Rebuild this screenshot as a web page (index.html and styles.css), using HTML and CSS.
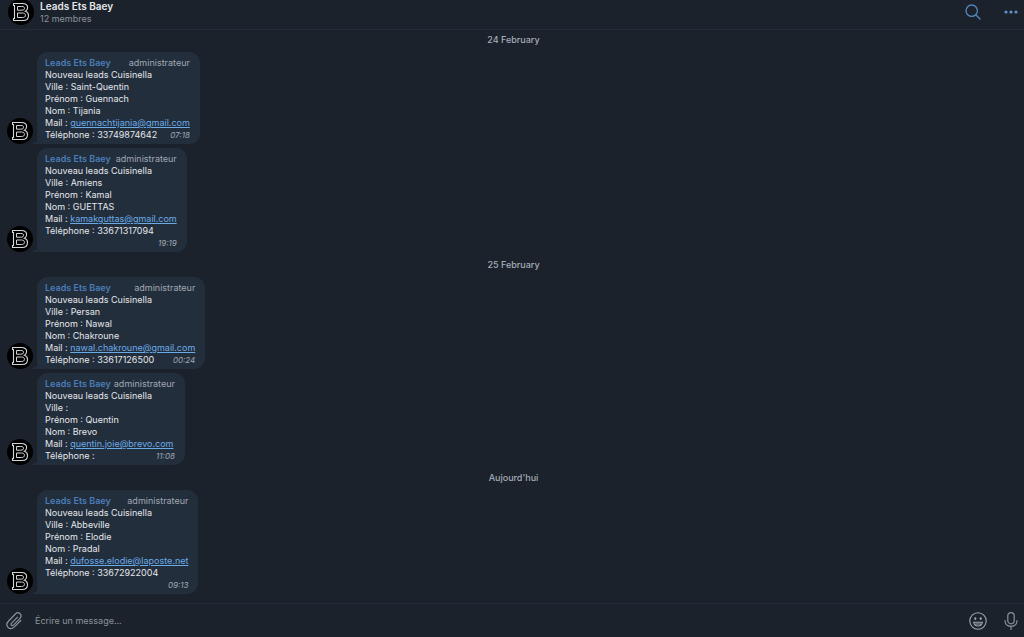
FILE: index.html
```html
<!DOCTYPE html>
<html lang="fr">
<head>
    <meta charset="UTF-8">
    <meta name="viewport" content="width=device-width, initial-scale=1.0">
    <title>Leads Ets Baey</title>
    <link rel="stylesheet" href="styles.css">
</head>
<body>
    <!-- Shared logo -->
    <svg class="sprite" aria-hidden="true">
        <symbol id="logo" viewBox="0 0 26 26">
            <circle cx="13" cy="13" r="13" fill="#000"/>
            <path d="M5.5 4.5H14.5C18 4.5 19.6 6.3 19.6 8.6C19.6 10.4 18.7 11.6 17.4 12.2C19.3 12.8 20.5 14.3 20.5 16.4C20.5 19.4 18.4 21.5 15 21.5H5.5V19.5H6.5V6.5H5.5Z" fill="none" stroke="#d4d6d9" stroke-width="1.1"/>
            <path d="M9.5 7.5H13.8C15.7 7.5 16.5 8 16.5 9.3C16.5 10.6 15.7 11.2 13.8 11.2H9.5ZM9.5 14H14.3C16.5 14 17.4 14.8 17.4 16.3C17.4 17.8 16.5 18.5 14.3 18.5H9.5Z" fill="none" stroke="#d4d6d9" stroke-width="1"/>
        </symbol>
    </svg>

    <div class="chat">
        <header class="chat-header">
            <svg class="avatar"><use href="#logo"/></svg>
            <div class="chat-info">
                <h1>Leads Ets Baey</h1>
                <p>12 membres</p>
            </div>
            <button class="icon-button" type="button" aria-label="Rechercher">
                <svg width="18" height="18" viewBox="0 0 18 18" fill="none" stroke="#5288c1" stroke-width="1.3" stroke-linecap="round">
                    <circle cx="7.7" cy="7.7" r="5.7"/>
                    <path d="M12 12L16 16"/>
                </svg>
            </button>
            <button class="icon-button" type="button" aria-label="Plus">
                <svg width="18" height="18" viewBox="0 0 18 18" fill="#5f93cc">
                    <circle cx="4" cy="9" r="1.6"/>
                    <circle cx="9" cy="9" r="1.6"/>
                    <circle cx="14" cy="9" r="1.6"/>
                </svg>
            </button>
        </header>

        <main class="messages">
            <h2 class="date">24 February</h2>
            <article class="message">
                <svg class="avatar"><use href="#logo"/></svg>
                <div class="bubble">
                    <div class="bubble-header"><span class="author">Leads Ets Baey</span><span class="role">administrateur</span></div>
                    <p>Nouveau leads Cuisinella</p>
                    <p>Ville : Saint-Quentin</p>
                    <p>Prénom : Guennach</p>
                    <p>Nom : Tijania</p>
                    <p>Mail : <a href="mailto:guennachtijania@gmail.com">guennachtijania@gmail.com</a></p>
                    <div class="bubble-footer"><p>Téléphone : 33749874642</p><time>07:18</time></div>
                </div>
            </article>
            <article class="message">
                <svg class="avatar"><use href="#logo"/></svg>
                <div class="bubble">
                    <div class="bubble-header"><span class="author">Leads Ets Baey</span><span class="role">administrateur</span></div>
                    <p>Nouveau leads Cuisinella</p>
                    <p>Ville : Amiens</p>
                    <p>Prénom : Kamal</p>
                    <p>Nom : GUETTAS</p>
                    <p>Mail : <a href="mailto:kamakguttas@gmail.com">kamakguttas@gmail.com</a></p>
                    <div class="bubble-footer stacked"><p>Téléphone : 33671317094</p><time>19:19</time></div>
                </div>
            </article>

            <h2 class="date">25 February</h2>
            <article class="message">
                <svg class="avatar"><use href="#logo"/></svg>
                <div class="bubble">
                    <div class="bubble-header"><span class="author">Leads Ets Baey</span><span class="role">administrateur</span></div>
                    <p>Nouveau leads Cuisinella</p>
                    <p>Ville : Persan</p>
                    <p>Prénom : Nawal</p>
                    <p>Nom : Chakroune</p>
                    <p>Mail : <a href="mailto:nawal.chakroune@gmail.com">nawal.chakroune@gmail.com</a></p>
                    <div class="bubble-footer"><p>Téléphone : 33617126500</p><time>00:24</time></div>
                </div>
            </article>
            <article class="message">
                <svg class="avatar"><use href="#logo"/></svg>
                <div class="bubble">
                    <div class="bubble-header"><span class="author">Leads Ets Baey</span><span class="role">administrateur</span></div>
                    <p>Nouveau leads Cuisinella</p>
                    <p>Ville :</p>
                    <p>Prénom : Quentin</p>
                    <p>Nom : Brevo</p>
                    <p>Mail : <a href="mailto:quentin.joie@brevo.com">quentin.joie@brevo.com</a></p>
                    <div class="bubble-footer"><p>Téléphone :</p><time>11:08</time></div>
                </div>
            </article>

            <h2 class="date">Aujourd'hui</h2>
            <article class="message">
                <svg class="avatar"><use href="#logo"/></svg>
                <div class="bubble">
                    <div class="bubble-header"><span class="author">Leads Ets Baey</span><span class="role">administrateur</span></div>
                    <p>Nouveau leads Cuisinella</p>
                    <p>Ville : Abbeville</p>
                    <p>Prénom : Elodie</p>
                    <p>Nom : Pradal</p>
                    <p>Mail : <a href="mailto:dufosse.elodie@laposte.net">dufosse.elodie@laposte.net</a></p>
                    <div class="bubble-footer stacked"><p>Téléphone : 33672922004</p><time>09:13</time></div>
                </div>
            </article>
        </main>

        <form class="composer">
            <button class="icon-button" type="button" aria-label="Joindre un fichier">
                <svg width="18" height="20" viewBox="0 0 18 20" fill="none" stroke="#8b929b" stroke-width="1.2" stroke-linecap="round" stroke-linejoin="round">
                    <path d="M12.5 6.2L6.6 12.2C5.2 13.7 7 15.5 8.5 14.1L14.8 7.6C18 4 13.8 -0.2 10.4 3L3.6 10C-0.8 14.6 4.7 20.4 9.4 15.9L15.8 9.5"/>
                </svg>
            </button>
            <input type="text" placeholder="Écrire un message..." aria-label="Écrire un message">
            <button class="icon-button" type="button" aria-label="Emoji">
                <svg width="18" height="18" viewBox="0 0 18 18" fill="none" stroke="#a0a6ad" stroke-width="1.1">
                    <circle cx="9" cy="9" r="8.2"/>
                    <path d="M4.6 10.2H13.4C13 12.7 11.2 14 9 14S5 12.7 4.6 10.2Z"/>
                    <path d="M6.2 12H11.8" stroke-width="1"/>
                    <ellipse cx="6.3" cy="6.6" rx="1.1" ry="1.3" fill="#a0a6ad" stroke="none"/>
                    <ellipse cx="11.7" cy="6.6" rx="1.1" ry="1.3" fill="#a0a6ad" stroke="none"/>
                </svg>
            </button>
            <button class="icon-button" type="button" aria-label="Message vocal">
                <svg width="18" height="20" viewBox="0 0 18 20" fill="none" stroke="#8b929b" stroke-width="1.2" stroke-linecap="round">
                    <rect x="5.8" y="1.6" width="6.4" height="11.2" rx="3.2"/>
                    <path d="M3 9.6C3 13.4 5.6 15.4 9 15.4S15 13.4 15 9.6M9 15.6V18.4"/>
                </svg>
            </button>
        </form>
    </div>
</body>
</html>
```

FILE: styles.css
```css
* {
    margin: 0;
    padding: 0;
    box-sizing: border-box;
}

body {
    font-family: Inter, 'Liberation Sans', sans-serif;
    font-size: 9px;
    line-height: 12px;
    background: #1b222b;
    color: #e4e7ea;
}

.sprite {
    display: none;
}

.chat {
    display: flex;
    flex-direction: column;
    height: 100vh;
}

.avatar {
    flex: none;
    width: 26px;
    height: 26px;
}

.icon-button {
    display: flex;
    flex: none;
    background: none;
    border: none;
    cursor: pointer;
}

/* Header */
.chat-header {
    display: flex;
    flex: none;
    align-items: flex-start;
    height: 30px;
    padding: 0 4px 0 8px;
    border-bottom: 1px solid #232d39;
}

.chat-header .avatar {
    margin-top: -1px;
}

.chat-header .icon-button {
    margin: 3px 0 0 20px;
}

.chat-info {
    flex: 1;
    margin-left: 6px;
}

.chat-info h1 {
    font-size: 10px;
    font-weight: 600;
    line-height: 12px;
}

.chat-info p {
    line-height: 14px;
    color: #8b929b;
}

/* Messages */
.messages {
    flex: 1;
    min-height: 0;
    padding: 4px 4px 0 7px;
    overflow: hidden;
}

.date {
    margin: 7px 0 6px;
    font-size: 9px;
    font-weight: 500;
    text-align: center;
    color: #a5adb7;
}

.date:first-child {
    margin-top: 0;
}

.message {
    display: flex;
    align-items: flex-end;
    gap: 4px;
}

.message + .message {
    margin-top: 4px;
}

.bubble {
    position: relative;
    padding: 5px 10px 3px 8px;
    background: #232e3d;
    border-radius: 11px 11px 11px 4px;
}

/* tail */
.bubble::before {
    content: '';
    position: absolute;
    left: -4px;
    bottom: 0;
    width: 8px;
    height: 8px;
    background: radial-gradient(circle at 0 0, transparent 6px, #232e3d 7px);
}

.bubble-header,
.bubble-footer {
    display: flex;
    justify-content: space-between;
    gap: 3px;
}

.author {
    font-weight: 600;
    color: #4a7db8;
}

.role,
.bubble time {
    color: #a0a8b3;
}

.bubble time {
    font-size: 8px;
    font-style: italic;
}

.bubble a {
    color: #6aabe6;
}

.bubble-footer.stacked {
    flex-direction: column;
    gap: 0;
}

.stacked time {
    align-self: flex-end;
}

/* Composer */
.composer {
    display: flex;
    flex: none;
    align-items: center;
    height: 34px;
    padding: 0 4px 0 5px;
    border-top: 1px solid #232d39;
}

.composer input {
    flex: 1;
    min-width: 0;
    margin-left: 12px;
    font: inherit;
    color: inherit;
    background: none;
    border: none;
    outline: none;
}

.composer input::placeholder {
    color: #8b929b;
    opacity: 1;
}

.composer .icon-button + .icon-button {
    margin-left: 15px;
}
```
